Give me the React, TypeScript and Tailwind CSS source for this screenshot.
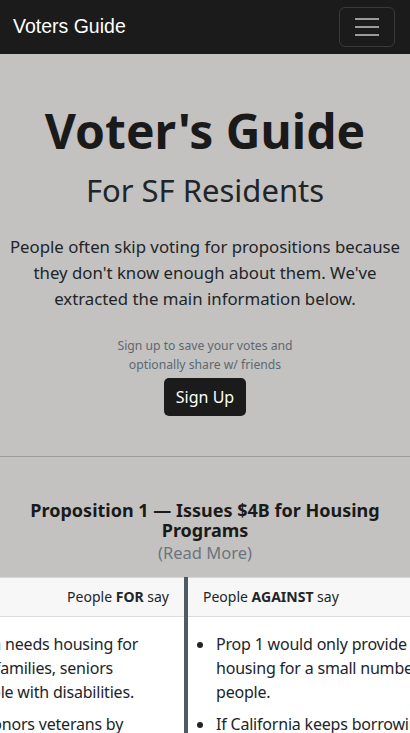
import { useState } from "react";

const forPoints = [
  "California needs housing for working families, seniors and people with disabilities.",
  "Prop 1 honors veterans by building supportive housing.",
];

const againstPoints = [
  "Prop 1 would only provide housing for a small number of people.",
  "If California keeps borrowing, taxpayers will pay more.",
];

function Navbar() {
  const [open, setOpen] = useState(false);
  return (
    <nav className="h-[54px] bg-[#1b1b1b] flex items-center justify-between pl-[13px] pr-[15px]">
      <span className="text-white text-[19.5px] font-['Liberation_Sans',sans-serif]">Voters Guide</span>
      <button
        type="button"
        onClick={() => setOpen(!open)}
        className="w-[56px] h-[40px] rounded-[6px] border border-[#3a3a3a] flex flex-col items-center justify-center gap-[6px]"
      >
        <span className="block w-[24px] h-[2px] bg-[#9b9b9b]" />
        <span className="block w-[24px] h-[2px] bg-[#9b9b9b]" />
        <span className="block w-[24px] h-[2px] bg-[#9b9b9b]" />
      </button>
    </nav>
  );
}

function SideCard({ strong, points, side }: { strong: string; points: string[]; side: "for" | "against" }) {
  return (
    <div className="w-[281px] shrink-0 bg-white border-t border-[#d6d6d6]">
      <div className={`bg-[#f7f7f7] border-b border-[#dcdcdc] px-[15px] py-[8px] text-[14px] leading-[22px] text-[#212529] ${side === "for" ? "text-right" : "text-left"}`}>
        People <b>{strong}</b> say
      </div>
      <ul className={`list-disc pl-[27px] pt-[15px] text-[16px] tracking-[-0.2px] leading-[24px] text-[#212529] ${side === "for" ? "pr-[40px]" : "pr-[16px]"}`}>
        {points.map((p) => (
          <li key={p} className="mb-[8px] pl-[1px]">{p}</li>
        ))}
      </ul>
    </div>
  );
}

export default function App() {
  return (
    <div className="min-h-[733px] bg-[#c3c2c0] font-['Noto_Sans',sans-serif] text-[#1a1a1a] overflow-hidden">
      <Navbar />

      {/* Hero */}
      <section className="px-[8px] pt-[48px] text-center">
        <h1 className="text-[48px] leading-[58px] font-bold">Voter's Guide</h1>
        <h2 className="mt-[11px] text-[31px] leading-[38px] text-[#212529]">For SF Residents</h2>
        <p className="mt-[25px] text-[16.8px] leading-[26px] text-[#212529] whitespace-nowrap">
          People often skip voting for propositions because
          <br />
          they don't know enough about them. We've
          <br />
          extracted the main information below.
        </p>
        <p className="mt-[24px] text-[12.2px] leading-[19px] text-[#5d6870]">
          Sign up to save your votes and
          <br />
          optionally share w/ friends
        </p>
        <button className="mt-[4px] h-[38px] px-[12px] rounded-[5px] bg-[#1b1b1b] text-white text-[16px]">
          Sign Up
        </button>
      </section>

      <hr className="mt-[40px] border-0 h-px bg-[#9c9b99]" />

      {/* Proposition */}
      <section className="pt-[43px] text-center px-[12px]">
        <h3 className="text-[18px] leading-[20px] font-bold">
          Proposition 1 — Issues $4B for Housing
          <br />
          Programs
        </h3>
        <a href="#" className="block mt-[1px] text-[16.5px] leading-[24px] text-[#6c757d]">(Read More)</a>
      </section>

      <div className="mt-[12px] flex ml-[-97px]">
        <SideCard strong="FOR" points={forPoints} side="for" />
        <div className="w-[4px] shrink-0 bg-[#4f5b62]" />
        <SideCard strong="AGAINST" points={againstPoints} side="against" />
      </div>
    </div>
  );
}
